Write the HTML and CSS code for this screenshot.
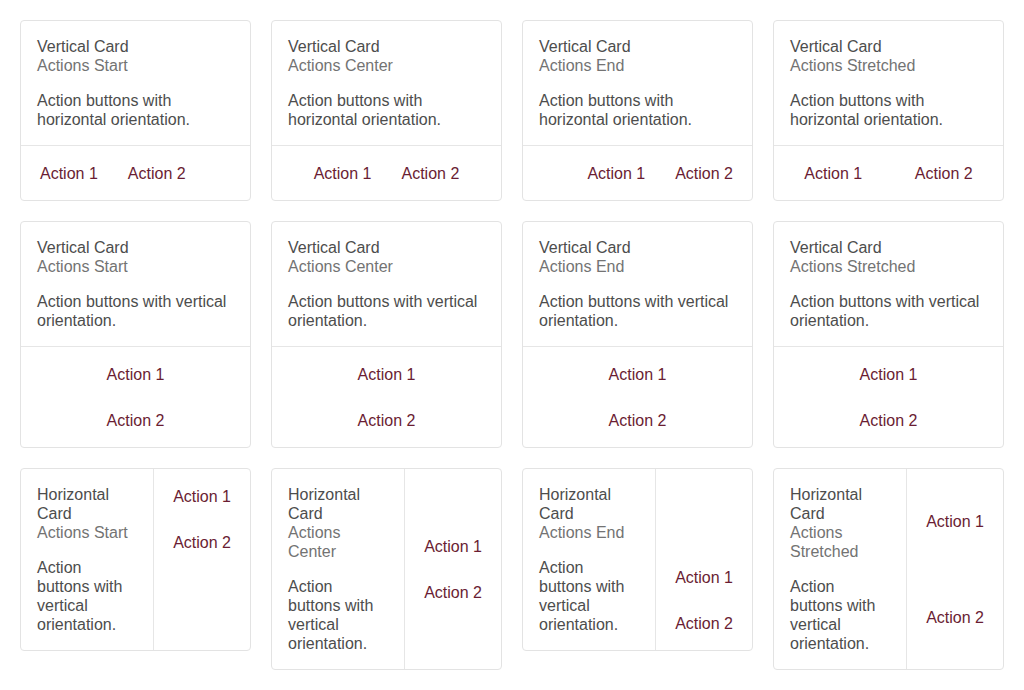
FILE: index.html
```html
<!DOCTYPE html>
<html>
<head>
<meta charset="utf-8">
<link rel="stylesheet" href="styles.css">
</head>
<body>
<div class="grid">
  <div class="card">
    <div class="content">
      <div class="title">Vertical Card</div>
      <div class="subtitle">Actions Start</div>
      <p class="text">Action buttons with horizontal orientation.</p>
    </div>
    <div class="actions row start"><button class="btn">Action 1</button><button class="btn">Action 2</button></div>
  </div>
  <div class="card">
    <div class="content">
      <div class="title">Vertical Card</div>
      <div class="subtitle">Actions Center</div>
      <p class="text">Action buttons with horizontal orientation.</p>
    </div>
    <div class="actions row center"><button class="btn">Action 1</button><button class="btn">Action 2</button></div>
  </div>
  <div class="card">
    <div class="content">
      <div class="title">Vertical Card</div>
      <div class="subtitle">Actions End</div>
      <p class="text">Action buttons with horizontal orientation.</p>
    </div>
    <div class="actions row end"><button class="btn">Action 1</button><button class="btn">Action 2</button></div>
  </div>
  <div class="card">
    <div class="content">
      <div class="title">Vertical Card</div>
      <div class="subtitle">Actions Stretched</div>
      <p class="text">Action buttons with horizontal orientation.</p>
    </div>
    <div class="actions row stretch"><button class="btn">Action 1</button><button class="btn">Action 2</button></div>
  </div>

  <div class="card">
    <div class="content">
      <div class="title">Vertical Card</div>
      <div class="subtitle">Actions Start</div>
      <p class="text">Action buttons with vertical orientation.</p>
    </div>
    <div class="actions col"><button class="btn">Action 1</button><button class="btn">Action 2</button></div>
  </div>
  <div class="card">
    <div class="content">
      <div class="title">Vertical Card</div>
      <div class="subtitle">Actions Center</div>
      <p class="text">Action buttons with vertical orientation.</p>
    </div>
    <div class="actions col"><button class="btn">Action 1</button><button class="btn">Action 2</button></div>
  </div>
  <div class="card">
    <div class="content">
      <div class="title">Vertical Card</div>
      <div class="subtitle">Actions End</div>
      <p class="text">Action buttons with vertical orientation.</p>
    </div>
    <div class="actions col"><button class="btn">Action 1</button><button class="btn">Action 2</button></div>
  </div>
  <div class="card">
    <div class="content">
      <div class="title">Vertical Card</div>
      <div class="subtitle">Actions Stretched</div>
      <p class="text">Action buttons with vertical orientation.</p>
    </div>
    <div class="actions col"><button class="btn">Action 1</button><button class="btn">Action 2</button></div>
  </div>

  <div class="card horizontal">
    <div class="content">
      <div class="title">Horizontal Card</div>
      <div class="subtitle">Actions Start</div>
      <p class="text">Action buttons with vertical orientation.</p>
    </div>
    <div class="actions side start"><button class="btn">Action 1</button><button class="btn">Action 2</button></div>
  </div>
  <div class="card horizontal">
    <div class="content">
      <div class="title">Horizontal Card</div>
      <div class="subtitle">Actions Center</div>
      <p class="text">Action buttons with vertical orientation.</p>
    </div>
    <div class="actions side center"><button class="btn">Action 1</button><button class="btn">Action 2</button></div>
  </div>
  <div class="card horizontal">
    <div class="content">
      <div class="title">Horizontal Card</div>
      <div class="subtitle">Actions End</div>
      <p class="text">Action buttons with vertical orientation.</p>
    </div>
    <div class="actions side end"><button class="btn">Action 1</button><button class="btn">Action 2</button></div>
  </div>
  <div class="card horizontal">
    <div class="content">
      <div class="title">Horizontal Card</div>
      <div class="subtitle">Actions Stretched</div>
      <p class="text">Action buttons with vertical orientation.</p>
    </div>
    <div class="actions side stretch"><button class="btn">Action 1</button><button class="btn">Action 2</button></div>
  </div>
</div>
</body>
</html>
```
FILE: styles.css
```css
* { box-sizing: border-box; }
html, body { margin: 0; padding: 0; background: #fff; }
body {
  font-family: "Liberation Sans", Arial, sans-serif;
  font-size: 16px;
  line-height: 19px;
  color: #4d4d4d;
}
.grid {
  display: grid;
  grid-template-columns: repeat(4, 231px);
  gap: 20px;
  padding: 20px;
  align-items: start;
}
.card {
  border: 1px solid #e3e3e3;
  border-radius: 4px;
  background: #fff;
  display: flex;
  flex-direction: column;
}
.card.horizontal { flex-direction: row; }
.content { padding: 16px; }
.horizontal .content { flex: 1; min-width: 0; }
.title { color: #4d4d4d; }
.subtitle { color: #737373; }
.text { margin: 16px 0 0; color: #4d4d4d; }
.actions {
  display: flex;
  gap: 8px;
  padding: 8px;
  border-top: 1px solid #e6e6e6;
}
.actions.row.start { justify-content: flex-start; }
.actions.row.center { justify-content: center; }
.actions.row.end { justify-content: flex-end; }
.actions.row.stretch .btn { flex: 1; }
.actions.col { flex-direction: column; }
.actions.side {
  flex-direction: column;
  border-top: none;
  border-left: 1px solid #e6e6e6;
  align-self: stretch;
}
.actions.side.start { justify-content: flex-start; }
.actions.side.center { justify-content: center; }
.actions.side.end { justify-content: flex-end; }
.actions.side.stretch .btn { flex: 1; height: auto; }
.btn {
  font-family: inherit;
  font-size: 16px;
  line-height: 19px;
  height: 38px;
  padding: 0 11px;
  border: none;
  background: transparent;
  color: #6a1d33;
  border-radius: 4px;
  cursor: pointer;
  white-space: nowrap;
}
```
